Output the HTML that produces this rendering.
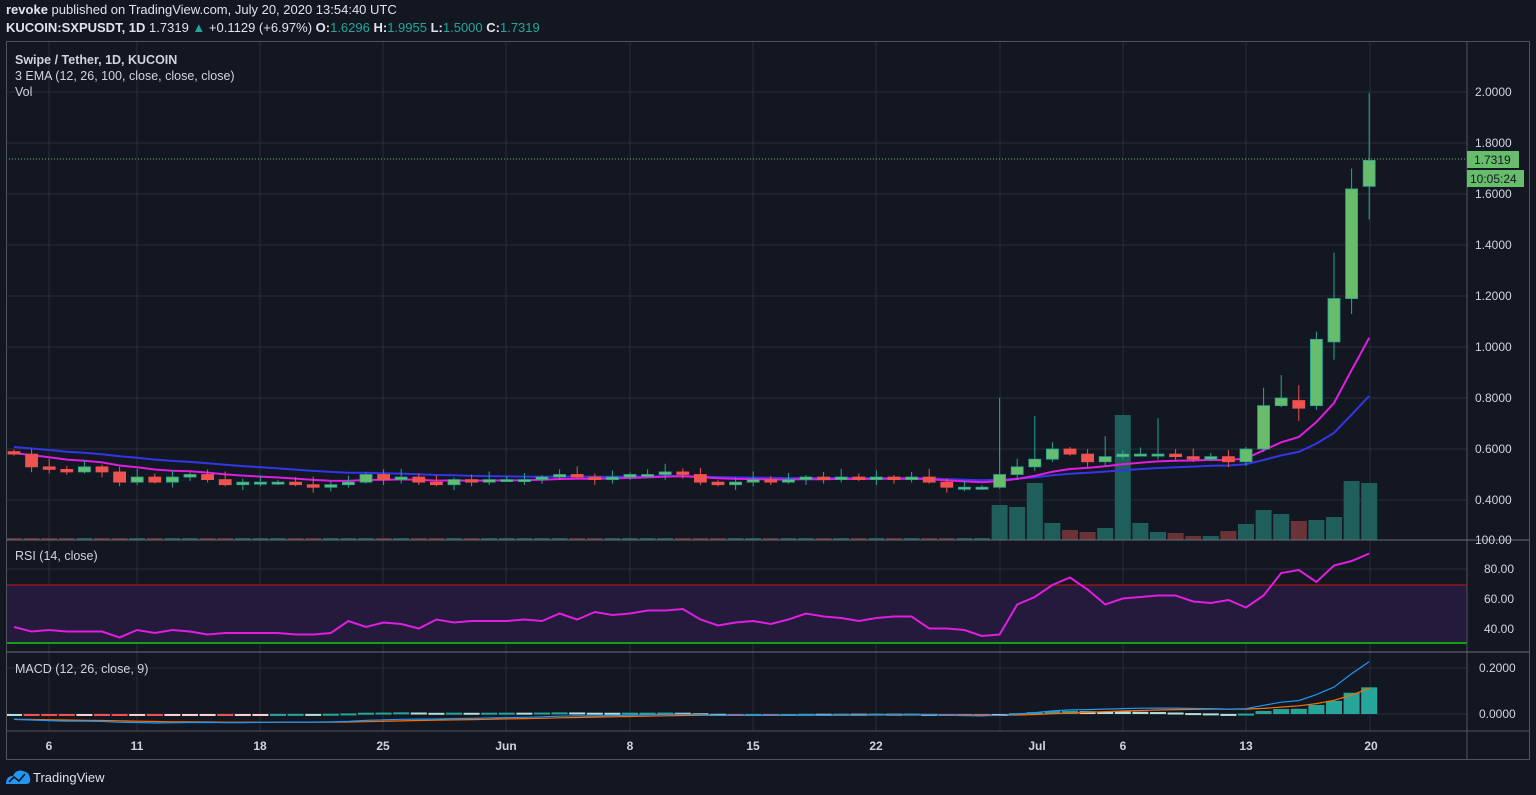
<!DOCTYPE html>
<html><head><meta charset="utf-8"><style>
body{margin:0;background:#131722;width:1536px;height:795px;overflow:hidden;font-family:"Liberation Sans",sans-serif;}
svg{position:absolute;left:0;top:0}
</style></head><body>
<svg id="c" width="1536" height="795" xmlns="http://www.w3.org/2000/svg" font-family="Liberation Sans, sans-serif"></svg>
<script>
const C=[.58,.53,.52,.51,.53,.51,.47,.49,.47,.49,.50,.48,.46,.47,.47,.47,.46,.45,.46,.47,.50,.48,.49,.47,.46,.48,.47,.48,
.48,.48,.49,.50,.49,.48,.49,.50,.50,.51,.50,.47,.46,.47,.48,.47,.48,.49,.48,.49,.48,.49,.48,.49,.47,.45,.45,.45,
.50,.53,.56,.60,.58,.55,.57,.58,.58,.58,.57,.56,.57,.55,.60,.77,.80,.76,1.03,1.19,1.62,1.7319];
const O=C.map((c,i)=>i?C[i-1]:.59);O[77]=1.63;O[75]=1.02;O[76]=1.19;O[74]=.77;O[73]=.79;O[72]=.77;
const H=C.map((c,i)=>Math.max(c,O[i])+0.008+((i*7)%5)*0.006),L=C.map((c,i)=>Math.min(c,O[i])-0.006-((i*3)%4)*0.005);
Object.assign(H,{56:.80,58:.73,62:.65,65:.72,71:.84,72:.89,73:.85,74:1.06,75:1.37,76:1.70,77:1.9955});
Object.assign(L,{73:.71,75:.95,76:1.13,77:1.5});
const V=new Array(78).fill(2);[35,33,57,17,10,8,12,125,17,8,7,4,4,9,16,30,26,19,20,23,59,57].forEach((v,k)=>V[56+k]=v);
const X=i=>14+i*17.6, Y=p=>92+(2-p)*255;
let s='';const g='#2a2e39';
[49,137,260,383,506,630,753,876,1000,1123,1246,1370].forEach(x=>s+=`<line x1="${x}" y1="41" x2="${x}" y2="731" stroke="${g}"/>`);
[2,1.8,1.6,1.4,1.2,1,.8,.6,.4].forEach(p=>s+=`<line x1="6" y1="${Y(p)}" x2="1467" y2="${Y(p)}" stroke="${g}"/>`);
[569,599,629].forEach(y=>s+=`<line x1="6" y1="${y}" x2="1467" y2="${y}" stroke="${g}"/>`);
[668,714].forEach(y=>s+=`<line x1="6" y1="${y}" x2="1467" y2="${y}" stroke="${g}"/>`);
V.forEach((v,i)=>{const up=C[i]>=O[i];s+=`<rect x="${X(i)-8}" y="${540-v}" width="16" height="${v}" fill="${up?'#1f5e5b':'#6b3338'}"/>`});
function ema(n,init){let e=init,a=2/(n+1);return C.map(c=>e=e+a*(c-e))}
const e12=ema(12,.585),e26=ema(26,.61);
const pl=(arr,f)=>arr.map((v,i)=>`${X(i).toFixed(1)},${f(v).toFixed(1)}`).join(' ');
s+=`<polyline points="${pl(e26,Y)}" fill="none" stroke="#3535e8" stroke-width="2"/>`;
s+=`<polyline points="${pl(e12,Y)}" fill="none" stroke="#e01ee0" stroke-width="2"/>`;
C.forEach((c,i)=>{const up=c>=O[i],col=up?'#67bd6b':'#ef5350',x=X(i);const t=Y(Math.max(c,O[i])),b=Y(Math.min(c,O[i]));
s+=`<line x1="${x}" y1="${Y(H[i])}" x2="${x}" y2="${Y(L[i])}" stroke="${up?'#26a69a':'#ef5350'}"/>`;
s+=`<rect x="${x-6}" y="${t}" width="12" height="${Math.max(b-t,2)}" fill="${col}" stroke="${up?'#26a69a':'#ef5350'}" stroke-width="0.8"/>`});
s+=`<line x1="6" y1="159" x2="1467" y2="159" stroke="#67bd6b" stroke-dasharray="1,2"/>`;
s+=`<rect x="6" y="585" width="1461" height="58" fill="#231a3c"/><line x1="6" y1="585" x2="1467" y2="585" stroke="#d01010"/><line x1="6" y1="643" x2="1467" y2="643" stroke="#14a014" stroke-width="2"/>`;
const R=[42,39,40,39,39,39,35,40,38,40,39,37,38,38,38,38,37,37,38,46,42,45,44,41,47,45,46,46,
46,47,46,51,47,52,50,51,53,53,54,47,43,45,46,44,47,51,49,48,46,48,49,49,41,41,40,36,
37,57,62,70,75,67,57,61,62,63,63,59,58,60,55,63,78,80,72,83,86,91,92].slice(0,78);
s+=`<polyline points="${pl(R,v=>540+(100-v)*1.5)}" fill="none" stroke="#e01ee0" stroke-width="2"/>`;
const M=C.map((c,i)=>e12[i]-e26[i]);let sg=M[0];const S=M.map(m=>sg=sg+0.2*(m-sg));
M.forEach((m,i)=>{const h=m-S[i],y=714-h*230,up=h>=0,gr=i&&h>(M[i-1]-S[i-1]);const col=up?(gr?'#26a69a':'#b2dfdb'):(gr?'#ffcdd2':'#ef5350');
s+=`<rect x="${X(i)-8}" y="${Math.min(y,714)}" width="16" height="${Math.max(Math.abs(h*230),2)}" fill="${col}"/>`});
s+=`<polyline points="${pl(S,v=>714-v*230)}" fill="none" stroke="#ff6d00" stroke-width="1.2"/>`;
s+=`<polyline points="${pl(M,v=>714-v*230)}" fill="none" stroke="#2196f3" stroke-width="1.2"/>`;
s+=`<rect x="6.5" y="41.5" width="1523" height="718" fill="none" stroke="#50535e"/><line x1="1467" y1="41" x2="1467" y2="759" stroke="#50535e"/>
<line x1="6" y1="540" x2="1530" y2="540" stroke="#6a6d78"/><line x1="6" y1="652" x2="1530" y2="652" stroke="#6a6d78"/><line x1="6" y1="731" x2="1530" y2="731" stroke="#50535e"/>`;
const T='fill="#d1d4dc" font-size="12"';
[2,1.8,1.6,1.4,1.2,1,.8,.6,.4].forEach(p=>s+=`<text x="1475" y="${Y(p)+4}" ${T}>${p.toFixed(4)}</text>`);
s+=`<text x="1475" y="544" ${T}>100.00</text><text x="1484" y="573" ${T}>80.00</text><text x="1484" y="603" ${T}>60.00</text><text x="1484" y="633" ${T}>40.00</text>`;
s+=`<text x="1479" y="672" ${T}>0.2000</text><text x="1479" y="718" ${T}>0.0000</text>`;
s+=`<rect x="1467" y="151" width="52" height="17" fill="#67bd6b"/><text x="1474" y="164" fill="#131722" font-size="12">1.7319</text>`;
s+=`<rect x="1467" y="170" width="57" height="17" fill="#67bd6b"/><text x="1470" y="183" fill="#131722" font-size="12">10:05:24</text>`;
[['6',49],['11',137],['18',260],['25',383],['Jun',506],['8',630],['15',753],['22',876],['Jul',1037],['6',1123],['13',1246],['20',1371]].forEach(([t,x])=>s+=`<text x="${x}" y="750" text-anchor="middle" font-weight="bold" ${T}>${t}</text>`);
s+=`<text x="15" y="64" fill="#d1d4dc" font-size="12.5" font-weight="bold">Swipe / Tether, 1D, KUCOIN</text><text x="15" y="80" fill="#d1d4dc" font-size="12.5">3 EMA (12, 26, 100, close, close, close)</text><text x="15" y="96" fill="#d1d4dc" font-size="12.5">Vol</text>`;
s+=`<text x="15" y="560" fill="#d1d4dc" font-size="12.5">RSI (14, close)</text><text x="15" y="673" fill="#d1d4dc" font-size="12.5">MACD (12, 26, close, 9)</text>`;
s+=`<text x="6" y="14" fill="#e0e3eb" font-size="13"><tspan font-weight="bold">revoke</tspan> published on TradingView.com, July 20, 2020 13:54:40 UTC</text>`;
s+=`<text x="6" y="32" fill="#e0e3eb" font-size="13"><tspan font-weight="bold">KUCOIN:SXPUSDT, 1D</tspan> 1.7319 <tspan fill="#26a69a">▲</tspan> +0.1129 (+6.97%) <tspan font-weight="bold">O:</tspan><tspan fill="#26a69a">1.6296</tspan> <tspan font-weight="bold">H:</tspan><tspan fill="#26a69a">1.9955</tspan> <tspan font-weight="bold">L:</tspan><tspan fill="#26a69a">1.5000</tspan> <tspan font-weight="bold">C:</tspan><tspan fill="#26a69a">1.7319</tspan></text>`;
s+=`<path d="M6 784 Q6 776 13 776 Q16 769 23 771 Q29 772 30 778 Q31 784 26 784 Z" fill="#2196f3"/><path d="M9 782 L14 777 L19 781 L25 774" fill="none" stroke="#131722" stroke-width="1.6"/><text x="33" y="782" fill="#e0e3eb" font-size="13">TradingView</text>`;
document.getElementById('c').innerHTML=s;
</script>
</body></html>
